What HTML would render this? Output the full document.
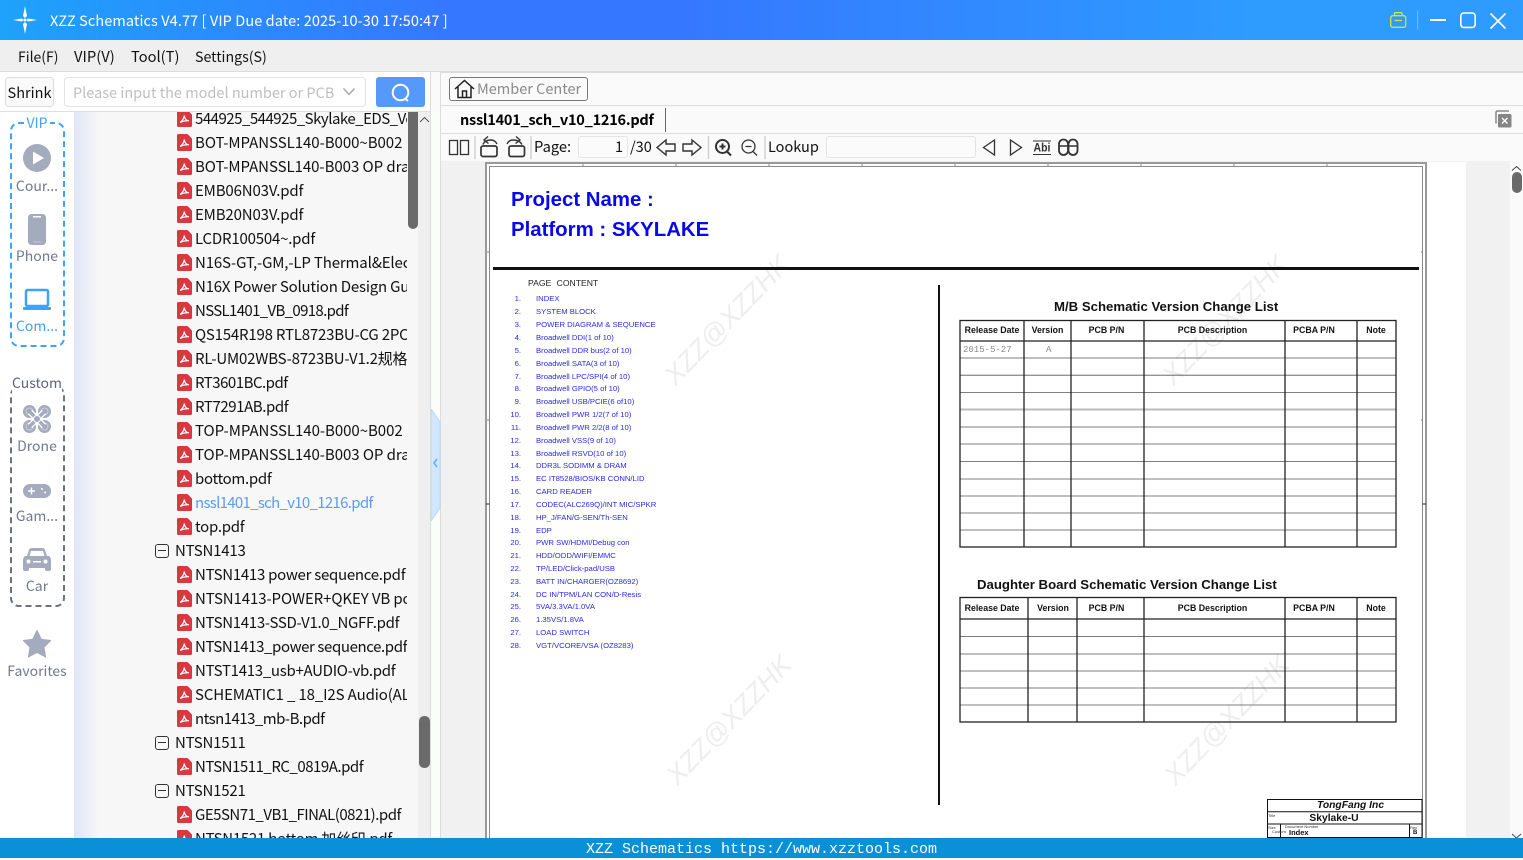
<!DOCTYPE html>
<html><head><meta charset="utf-8"><style>
html,body{margin:0;padding:0}
body{width:1523px;height:858px;overflow:hidden;position:relative;background:#fafafa;font-family:"Noto Sans CJK SC","Liberation Sans",sans-serif;color:#111}
div,span,svg{position:absolute;box-sizing:border-box}
.t{white-space:nowrap;line-height:20px}
#tree{left:74px;top:112px;width:333px;height:726px;overflow:hidden;background:linear-gradient(90deg,#dfe6f5 0,#f7f7f7 26px)}
#tree .r{left:121px;font-size:15px;white-space:nowrap;line-height:20px;color:#111;margin-top:1px}
#tree .f{left:101px;font-size:15px;white-space:nowrap;line-height:20px;color:#111;margin-top:1px;letter-spacing:-.2px}
#tree svg.p{left:103px;width:15px;height:17px}
#tree .m{left:81px;width:14px;height:14px;border:1px solid #333;border-radius:3px;margin-top:1px}
#tree .m:after{content:"";position:absolute;left:2px;right:2px;top:5px;height:1px;background:#333}
.sl{left:10px;width:54px;text-align:center;font-size:14px;color:#71798c;line-height:20px;white-space:nowrap}
.toc{font:7.7px/10px "Liberation Sans",sans-serif;color:#2a2ae6;white-space:nowrap}
.n{font:7.7px/10px "Liberation Sans",sans-serif;color:#2a2ae6;text-align:right;width:14px;left:507px}
.th{font:bold 8.8px/10px "Liberation Sans",sans-serif;color:#111;text-align:center;white-space:nowrap}
.wm{font:italic 27px/40px "Liberation Sans",sans-serif;color:#eeeeee;white-space:nowrap;transform:rotate(-46deg);width:180px;height:40px;text-align:center}
</style></head><body>
<svg width="0" height="0" style="position:absolute"><defs>
<symbol id="pdf" viewBox="0 0 15 17"><path d="M1.500 0H10.500L15 4.500V15.500Q15 17 13.500 17H1.500Q0 17 0 15.500V1.500Q0 0 1.500 0Z" fill="#d8383f"/><path d="M3 12.500C5 11.500 7 8.500 7.300 5.500C7.600 8.500 9 10.500 12 10.800C9 10.600 5.500 11.200 3 12.500Z" fill="none" stroke="#fff" stroke-width="1.200"/></symbol>
</defs></svg>

<!-- title bar -->
<div style="left:0;top:0;width:1523px;height:40px;background:linear-gradient(90deg,#1ea2fb 0,#3578ff 29%,#3578ff 45%,#2d9bff 82%,#2d9bff 100%)"></div>
<svg style="left:12px;top:5px" width="26" height="30" viewBox="0 0 26 30"><path d="M13 1L15 11L13 13L11 11ZM13 29L11 19L13 17L15 19ZM1 15L10 13.500L11.500 15L10 16.500ZM25 15L16 16.500L14.500 15L16 13.500Z" fill="#fff"/><circle cx="13" cy="15" r="1.500" fill="#fff"/></svg>
<div class="t" style="left:50px;top:11px;color:#fff;font-size:14.5px;letter-spacing:.09px">XZZ Schematics V4.77 [ VIP Due date: 2025-10-30 17:50:47 ]</div>
<svg style="left:1388px;top:10px" width="90" height="22" viewBox="0 0 90 22" fill="none"><g stroke="#d9e23c" stroke-width="1.300"><rect x="2.700" y="5.700" width="15" height="11.600" rx="2"/><path d="M6.500 5.500V3.500Q6.500 2.700 7.500 2.700H13Q14 2.700 14 3.500V5.500M6.500 10.500H14"/></g><path d="M29.700 .5V19.500" stroke="#7fbdf5"/><path d="M42 10H58" stroke="#fff" stroke-width="2"/><rect x="72.800" y="3" width="14.400" height="14.400" rx="3" stroke="#fff" stroke-width="1.600"/></svg>
<svg style="left:1488px;top:11px" width="20" height="20" viewBox="0 0 20 20" fill="none"><path d="M2.500 2.500L17.500 17.500M17.500 2.500L2.500 17.500" stroke="#fff" stroke-width="1.600"/></svg>

<!-- menu -->
<div style="left:0;top:40px;width:1523px;height:32px;background:#efefef;border-bottom:1px solid #dcdcdc"></div>
<div class="t" style="left:18px;top:47px;font-size:14px">File(F)</div>
<div class="t" style="left:74px;top:47px;font-size:14.800px">VIP(V)</div>
<div class="t" style="left:131px;top:47px;font-size:14.700px">Tool(T)</div>
<div class="t" style="left:195px;top:47px;font-size:14.200px">Settings(S)</div>

<!-- left panel -->
<div style="left:0;top:72px;width:431px;height:766px;background:#fff"></div>
<div style="left:0;top:111px;width:431px;height:1px;background:#dedede"></div>
<div class="t" style="left:5px;top:77px;width:49px;height:30px;border:1px solid #ddd;border-radius:4px;background:#fafafa;text-align:center;line-height:29px;font-size:14.500px">Shrink</div>
<div style="left:64px;top:77px;width:302px;height:30px;border:1px solid #e2e2e2;border-radius:4px;background:#fff"></div>
<div class="t" style="left:73px;top:83px;font-size:14.500px;color:#bfbfbf">Please input the model number or PCB</div>
<svg style="left:342px;top:87px" width="14" height="10" viewBox="0 0 14 10" fill="none"><path d="M1.500 1.500L7 7.500L12.500 1.500" stroke="#a8a8a8" stroke-width="1.400"/></svg>
<div style="left:376px;top:77px;width:49px;height:30px;background:#5599fb;border-radius:3px"></div>
<svg style="left:390px;top:82px" width="22" height="22" viewBox="0 0 22 22" fill="none"><circle cx="10.500" cy="10.500" r="7.800" stroke="#fff" stroke-width="2"/><path d="M15 16.500L18 19" stroke="#fff" stroke-width="2"/></svg>

<!-- sidebar -->
<div style="left:10px;top:122px;width:55px;height:225px;border:2px dashed #3ca2fa;border-radius:9px"></div>
<div class="sl" style="top:113px;color:#3ca2fa"><span style="position:static;background:#fff;padding:0 2px">VIP</span></div>
<svg style="left:23px;top:144px" width="28" height="28" viewBox="0 0 28 28"><circle cx="14" cy="14" r="14" fill="#a3abbd"/><path d="M10 7.500L21 14L10 20.500Z" fill="#fff"/></svg>
<div class="sl" style="top:176px">Cour...</div>
<svg style="left:28px;top:214px" width="18" height="31" viewBox="0 0 18 31"><rect width="18" height="31" rx="3.500" fill="#a3abbd"/><rect x="5" y="2" width="8" height="1.500" fill="#fff"/><rect x="5" y="27.500" width="8" height="1" fill="#c6cbd6"/></svg>
<div class="sl" style="top:246px">Phone</div>
<svg style="left:22px;top:288px" width="30" height="24" viewBox="0 0 30 24"><rect x="4" y="2" width="22" height="16" rx="1.500" fill="none" stroke="#3ca2fa" stroke-width="2.500"/><rect x="1" y="19" width="28" height="3" rx="1" fill="#3ca2fa"/></svg>
<div class="sl" style="top:316px;color:#3ca2fa">Com...</div>

<div style="left:10px;top:386px;width:55px;height:221px;border:2px dashed #6a7282;border-radius:9px"></div>
<div class="sl" style="top:373px;color:#5d6577"><span style="position:static;background:#fff">Custom</span></div>
<svg style="left:23px;top:405px" width="28" height="28" viewBox="0 0 28 28" fill="none"><g fill="#a3abbd"><circle cx="6.500" cy="6.500" r="6.500"/><circle cx="21.500" cy="6.500" r="6.500"/><circle cx="6.500" cy="21.500" r="6.500"/><circle cx="21.500" cy="21.500" r="6.500"/></g><g stroke="#cdd1db" stroke-width="1"><circle cx="6.500" cy="6.500" r="3.500"/><circle cx="21.500" cy="6.500" r="3.500"/><circle cx="6.500" cy="21.500" r="3.500"/><circle cx="21.500" cy="21.500" r="3.500"/></g><path d="M7 7L21 21M21 7L7 21" stroke="#fff" stroke-width="6"/><path d="M6 6L22 22M22 6L6 22" stroke="#a3abbd" stroke-width="3.500"/><circle cx="14" cy="14" r="3.500" fill="#a3abbd" stroke="#fff"/></svg>
<div class="sl" style="top:436px">Drone</div>
<svg style="left:23px;top:484px" width="28" height="14" viewBox="0 0 28 14"><rect width="28" height="14" rx="7" fill="#a3abbd"/><path d="M5 7H12M8.500 3.500V10.500" stroke="#fff" stroke-width="1.500"/><circle cx="19" cy="5" r="1" fill="#fff"/><circle cx="22" cy="8.500" r="1" fill="#fff"/></svg>
<div class="sl" style="top:506px">Gam...</div>
<svg style="left:23px;top:548px" width="28" height="24" viewBox="0 0 28 24"><path d="M6 2Q6.500 0 9 0H19Q21.500 0 22 2L24 8H26Q28 10 28 12V21Q28 23 26 23H24Q22 23 22 21V20H6V21Q6 23 4 23H2Q0 23 0 21V12Q0 10 2 8H4Z" fill="#a3abbd"/><path d="M6.500 8L8 3H20L21.500 8Z" fill="#fff"/><circle cx="5.500" cy="13.500" r="2" fill="#fff"/><circle cx="22.500" cy="13.500" r="2" fill="#fff"/><rect x="10" y="13" width="8" height="1.500" fill="#fff"/></svg>
<div class="sl" style="top:576px">Car</div>
<svg style="left:23px;top:630px" width="28" height="28" viewBox="0 0 28 28"><path d="M14 0.500L18.300 9.200L27.800 10.500L21 17.300L22.600 27L14 22.400L5.400 27L7 17.300L.2 10.500L9.700 9.200Z" fill="#a3abbd" stroke="#a3abbd" stroke-linejoin="round"/></svg>
<div class="sl" style="top:661px;left:0;width:74px">Favorites</div>

<!-- tree -->
<div id="tree">
<svg class="p" style="top:-2px"><use href="#pdf"/></svg><div class="r" style="top:-4px;letter-spacing:-.5px">544925_544925_Skylake_EDS_Vol1.pdf</div>
<svg class="p" style="top:22px"><use href="#pdf"/></svg><div class="r" style="top:20px;letter-spacing:-.04px">BOT-MPANSSL140-B000~B002</div>
<svg class="p" style="top:46px"><use href="#pdf"/></svg><div class="r" style="top:44px;letter-spacing:-.05px">BOT-MPANSSL140-B003 OP draw.pdf</div>
<svg class="p" style="top:70px"><use href="#pdf"/></svg><div class="r" style="top:68px;letter-spacing:-.15px">EMB06N03V.pdf</div>
<svg class="p" style="top:94px"><use href="#pdf"/></svg><div class="r" style="top:92px;letter-spacing:-.15px">EMB20N03V.pdf</div>
<svg class="p" style="top:118px"><use href="#pdf"/></svg><div class="r" style="top:116px;letter-spacing:-.2px">LCDR100504~.pdf</div>
<svg class="p" style="top:142px"><use href="#pdf"/></svg><div class="r" style="top:140px;letter-spacing:-.15px">N16S-GT,-GM,-LP Thermal&amp;Electrical.pdf</div>
<svg class="p" style="top:166px"><use href="#pdf"/></svg><div class="r" style="top:164px;letter-spacing:-.2px">N16X Power Solution Design Guide.pdf</div>
<svg class="p" style="top:190px"><use href="#pdf"/></svg><div class="r" style="top:188px;letter-spacing:-.65px">NSSL1401_VB_0918.pdf</div>
<svg class="p" style="top:214px"><use href="#pdf"/></svg><div class="r" style="top:212px;letter-spacing:-.2px">QS154R198 RTL8723BU-CG 2PCS.pdf</div>
<svg class="p" style="top:238px"><use href="#pdf"/></svg><div class="r" style="top:236px;letter-spacing:-.2px">RL-UM02WBS-8723BU-V1.2规格书.pdf</div>
<svg class="p" style="top:262px"><use href="#pdf"/></svg><div class="r" style="top:260px;letter-spacing:-.5px">RT3601BC.pdf</div>
<svg class="p" style="top:286px"><use href="#pdf"/></svg><div class="r" style="top:284px;letter-spacing:-.42px">RT7291AB.pdf</div>
<svg class="p" style="top:310px"><use href="#pdf"/></svg><div class="r" style="top:308px;letter-spacing:-.04px">TOP-MPANSSL140-B000~B002</div>
<svg class="p" style="top:334px"><use href="#pdf"/></svg><div class="r" style="top:332px;letter-spacing:-.05px">TOP-MPANSSL140-B003 OP draw.pdf</div>
<svg class="p" style="top:358px"><use href="#pdf"/></svg><div class="r" style="top:356px;letter-spacing:-.3px">bottom.pdf</div>
<svg class="p" style="top:382px"><use href="#pdf"/></svg><div class="r" style="top:380px;color:#5a9cf5;letter-spacing:-.7px">nssl1401_sch_v10_1216.pdf</div>
<svg class="p" style="top:406px"><use href="#pdf"/></svg><div class="r" style="top:404px;letter-spacing:-.28px">top.pdf</div>
<div class="m" style="top:431px"></div><div class="f" style="top:428px">NTSN1413</div>
<svg class="p" style="top:454px"><use href="#pdf"/></svg><div class="r" style="top:452px;letter-spacing:-.28px">NTSN1413 power sequence.pdf</div>
<svg class="p" style="top:478px"><use href="#pdf"/></svg><div class="r" style="top:476px;letter-spacing:-.1px">NTSN1413-POWER+QKEY VB power.pdf</div>
<svg class="p" style="top:502px"><use href="#pdf"/></svg><div class="r" style="top:500px;letter-spacing:-.3px">NTSN1413-SSD-V1.0_NGFF.pdf</div>
<svg class="p" style="top:526px"><use href="#pdf"/></svg><div class="r" style="top:524px;letter-spacing:-.4px">NTSN1413_power sequence.pdf</div>
<svg class="p" style="top:550px"><use href="#pdf"/></svg><div class="r" style="top:548px;letter-spacing:-.28px">NTST1413_usb+AUDIO-vb.pdf</div>
<svg class="p" style="top:574px"><use href="#pdf"/></svg><div class="r" style="top:572px;letter-spacing:-.12px">SCHEMATIC1 _ 18_I2S Audio(ALC.pdf</div>
<svg class="p" style="top:598px"><use href="#pdf"/></svg><div class="r" style="top:596px;letter-spacing:-.53px">ntsn1413_mb-B.pdf</div>
<div class="m" style="top:623px"></div><div class="f" style="top:620px">NTSN1511</div>
<svg class="p" style="top:646px"><use href="#pdf"/></svg><div class="r" style="top:644px;letter-spacing:-.48px">NTSN1511_RC_0819A.pdf</div>
<div class="m" style="top:671px"></div><div class="f" style="top:668px">NTSN1521</div>
<svg class="p" style="top:694px"><use href="#pdf"/></svg><div class="r" style="top:692px;letter-spacing:-.5px">GE5SN71_VB1_FINAL(0821).pdf</div>
<svg class="p" style="top:718px"><use href="#pdf"/></svg><div class="r" style="top:716px;letter-spacing:-.28px">NTSN1521 bottom 加丝印.pdf</div>
</div>
<div style="left:407px;top:112px;width:11px;height:726px;background:#f7f7f7"></div>
<div style="left:408px;top:112px;width:10px;height:117px;background:#6a6a6a;border-radius:0 0 5px 5px"></div>
<div style="left:418px;top:112px;width:12px;height:726px;background:#efefef"></div>
<div style="left:419px;top:716px;width:11px;height:52px;background:#6a6a6a;border-radius:5px"></div>
<svg style="left:419px;top:116px" width="11" height="8" viewBox="0 0 11 8" fill="none"><path d="M1 6L5.500 1.500L10 6" stroke="#555"/></svg>

<!-- splitter -->
<div style="left:430px;top:72px;width:1px;height:766px;background:#dcdcdc"></div>
<div style="left:431px;top:112px;width:9px;height:726px;background:#fbfdfb"></div>
<div style="left:440px;top:72px;width:1px;height:766px;background:#dcdcdc"></div>
<svg style="left:431px;top:409px" width="10" height="112" viewBox="0 0 10 112"><path d="M0 0L9 13V99L0 112Z" fill="#d1e7fd" stroke="#b3d8fb"/><path d="M6 50L3 54L6 58" fill="none" stroke="#65aef5" stroke-width="1.500"/></svg>

<!-- right top rows -->
<div style="left:441px;top:72px;width:1082px;height:1px;background:#dcdcdc"></div>
<div style="left:441px;top:105px;width:1082px;height:1px;background:#dcdcdc"></div>
<div style="left:441px;top:133px;width:1082px;height:1px;background:#dcdcdc"></div>
<div style="left:449px;top:77px;width:139px;height:24px;border:1px solid #777;border-radius:3px;background:#fafafa"></div>
<svg style="left:454px;top:79px" width="21" height="20" viewBox="0 0 21 20" fill="none" stroke="#222" stroke-width="1.500"><path d="M1 10L10.500 1.500L20 10M4 8V18.500H17V8M8.500 18.500V12H12.500V18.500"/></svg>
<div class="t" style="left:477px;top:79px;font-size:14.500px;color:#8a8a8a">Member Center</div>
<div class="t" style="left:460px;top:110px;font-size:14.500px;font-weight:700;color:#000;letter-spacing:-.24px">nssl1401_sch_v10_1216.pdf</div>
<div style="left:665px;top:108px;width:1px;height:24px;background:#666"></div>
<svg style="left:1493px;top:109px" width="20" height="20" viewBox="0 0 20 20"><path d="M3 14.500V3.500Q3 2 4.500 2H16" fill="none" stroke="#888" stroke-width="1.500"/><rect x="5" y="5" width="13.500" height="13.500" rx="1.500" fill="#858585"/><path d="M9 9L14.500 14.500M14.500 9L9 14.500" stroke="#fff" stroke-width="1.300"/></svg>

<!-- toolbar -->
<svg style="left:441px;top:134px" width="660" height="27" viewBox="0 0 660 27" fill="none" stroke="#333" stroke-width="1.300">
<rect x="8.500" y="6.500" width="8" height="14"/><rect x="19.500" y="6.500" width="8" height="14"/>
<path d="M34 2V25" stroke="#ccc"/>
<rect x="40" y="12" width="16" height="10.500" rx="2" stroke-width="1.700"/><path d="M42 10.500Q43.500 6 50 6Q54 6 56 10M47 2.500L43 6L47.500 9.500" stroke-width="1.400"/>
<rect x="68" y="12" width="15.500" height="10.500" rx="2" stroke-width="1.700"/><path d="M66 10Q68 6 72 6Q78.500 6 81 10.500M75 2.500L79 6L74.500 9.500" stroke-width="1.400"/>
<path d="M90 2V25" stroke="#ccc"/>
<path d="M234 10H225V6L216 13.500L225 21V17H234Z" stroke-width="1.400"/>
<path d="M242 10H251V6L260 13.500L251 21V17H242Z" stroke-width="1.400"/>
<path d="M267.500 2V25" stroke="#ccc"/>
<circle cx="281.500" cy="12.500" r="6.500" stroke-width="2"/><path d="M286 17.500L290 21.500" stroke-width="2"/><path d="M278.500 12.500H284.500M281.500 9.500V15.500" stroke-width="2"/>
<circle cx="307.500" cy="12.500" r="6.500"/><path d="M312 17.500L316 21.500M304.500 12.500H310.500"/>
<path d="M324 2V25" stroke="#ccc"/>
<path d="M553.500 6L542.500 13.500L553.500 21Z"/>
<path d="M569.500 6L580.500 13.500L569.500 21Z"/>
<path d="M592 7H610M592 20.500H610" stroke-width="1.100"/>
<rect x="618" y="5.500" width="9" height="15.500" rx="4.500" stroke-width="1.800"/><rect x="627.500" y="5.500" width="9" height="15.500" rx="4.500" stroke-width="1.800"/><path d="M618 12H636.500" stroke-width="1.400"/>
</svg>
<div class="t" style="left:1032px;top:142px;font:bold 10.500px/12px 'Liberation Sans',sans-serif;color:#333;width:20px;text-align:center;transform:scaleY(1.100)">Abi</div>
<div class="t" style="left:534px;top:137px;font-size:14.700px">Page:</div>
<div style="left:578px;top:136px;width:50px;height:22px;border:1px solid #e4e4e4;border-radius:3px;background:#fbfbfb"></div>
<div class="t" style="left:578px;top:137px;width:45px;text-align:right;font-size:14.500px">1</div>
<div class="t" style="left:630px;top:137px;font-size:14.500px">/30</div>
<div class="t" style="left:768px;top:137px;font-size:14.500px">Lookup</div>
<div style="left:826px;top:136px;width:150px;height:22px;border:1px solid #e4e4e4;border-radius:3px;background:#fbfbfb"></div>

<!-- PDF view -->
<div style="left:441px;top:161px;width:1069px;height:677px;background:#f1f1f1"></div>
<div style="left:485px;top:162px;width:981px;height:676px;background:#fff"></div>
<div style="left:485px;top:162px;width:942px;height:676px;border:solid #999;border-width:2px 2px 0 2px"></div>
<div style="left:489px;top:166px;width:934px;height:672px;border:solid #8a8a8a;border-width:1px 1px 0 1px"></div>
<svg style="left:485px;top:162px" width="942" height="676" viewBox="0 0 942 676" fill="none" stroke="#888"><path d="M98 2V4M191 2V4M284 2V4M377 2V4M470 2V4M563 2V4M656 2V4M749 2V4M842 2V4M2 258H4M938 258H936M2 90H4M938 90H936"/><path d="M1 342H4.500M941 342H937.500" stroke="#222"/></svg>
<div style="left:1510px;top:161px;width:13px;height:677px;background:#fafafa"></div>
<div style="left:1512px;top:172px;width:10px;height:21px;background:#6a6a6a;border-radius:5px"></div>
<svg style="left:1511px;top:165px" width="11" height="7" viewBox="0 0 11 7" fill="none"><path d="M1 5.500L5.500 1.500L10 5.500" stroke="#444"/></svg>
<svg style="left:1511px;top:833px" width="11" height="6" viewBox="0 0 11 6" fill="none"><path d="M1 1L5.500 5L10 1" stroke="#444"/></svg>

<div class="wm" style="left:637px;top:300px">XZZ@XZZHK</div>
<div class="wm" style="left:1135px;top:300px">XZZ@XZZHK</div>
<div class="wm" style="left:639px;top:700px">XZZ@XZZHK</div>
<div class="wm" style="left:1137px;top:700px">XZZ@XZZHK</div>

<div class="t" style="left:511px;top:188px;font:bold 20.400px/24px 'Liberation Sans',sans-serif;color:#0808f0">Project Name :</div>
<div class="t" style="left:511px;top:218px;font:bold 20.400px/24px 'Liberation Sans',sans-serif;color:#0808f0">Platform : SKYLAKE</div>
<div style="left:493px;top:267px;width:926px;height:3px;background:#111"></div>
<div class="t" style="left:528px;top:278px;font:8.600px/10px 'Liberation Sans',sans-serif;color:#222;word-spacing:3px">PAGE CONTENT</div>

<div class="n" style="top:294px">1.</div><div class="toc" style="left:536px;top:294px">INDEX</div>
<div class="n" style="top:307px">2.</div><div class="toc" style="left:536px;top:307px">SYSTEM BLOCK</div>
<div class="n" style="top:320px">3.</div><div class="toc" style="left:536px;top:320px">POWER DIAGRAM &amp; SEQUENCE</div>
<div class="n" style="top:333px">4.</div><div class="toc" style="left:536px;top:333px">Broadwell DDI(1 of 10)</div>
<div class="n" style="top:346px">5.</div><div class="toc" style="left:536px;top:346px">Broadwell DDR bus(2 of 10)</div>
<div class="n" style="top:359px">6.</div><div class="toc" style="left:536px;top:359px">Broadwell SATA(3 of 10)</div>
<div class="n" style="top:372px">7.</div><div class="toc" style="left:536px;top:372px">Broadwell LPC/SPI(4 of 10)</div>
<div class="n" style="top:384px">8.</div><div class="toc" style="left:536px;top:384px">Broadwell GPIO(5 of 10)</div>
<div class="n" style="top:397px">9.</div><div class="toc" style="left:536px;top:397px">Broadwell USB/PCIE(6 of10)</div>
<div class="n" style="top:410px">10.</div><div class="toc" style="left:536px;top:410px">Broadwell PWR 1/2(7 of 10)</div>
<div class="n" style="top:423px">11.</div><div class="toc" style="left:536px;top:423px">Broadwell PWR 2/2(8 of 10)</div>
<div class="n" style="top:436px">12.</div><div class="toc" style="left:536px;top:436px">Broadwell VSS(9 of 10)</div>
<div class="n" style="top:449px">13.</div><div class="toc" style="left:536px;top:449px">Broadwell RSVD(10 of 10)</div>
<div class="n" style="top:461px">14.</div><div class="toc" style="left:536px;top:461px">DDR3L SODIMM &amp; DRAM</div>
<div class="n" style="top:474px">15.</div><div class="toc" style="left:536px;top:474px">EC IT8528/BIOS/KB CONN/LID</div>
<div class="n" style="top:487px">16.</div><div class="toc" style="left:536px;top:487px">CARD READER</div>
<div class="n" style="top:500px">17.</div><div class="toc" style="left:536px;top:500px">CODEC(ALC269Q)/INT MIC/SPKR</div>
<div class="n" style="top:513px">18.</div><div class="toc" style="left:536px;top:513px">HP_J/FAN/G-SEN/Th-SEN</div>
<div class="n" style="top:526px">19.</div><div class="toc" style="left:536px;top:526px">EDP</div>
<div class="n" style="top:538px">20.</div><div class="toc" style="left:536px;top:538px">PWR SW/HDMI/Debug con</div>
<div class="n" style="top:551px">21.</div><div class="toc" style="left:536px;top:551px">HDD/ODD/WIFI/EMMC</div>
<div class="n" style="top:564px">22.</div><div class="toc" style="left:536px;top:564px">TP/LED/Click-pad/USB</div>
<div class="n" style="top:577px">23.</div><div class="toc" style="left:536px;top:577px">BATT IN/CHARGER(OZ8692)</div>
<div class="n" style="top:590px">24.</div><div class="toc" style="left:536px;top:590px">DC IN/TPM/LAN CON/D-Resis</div>
<div class="n" style="top:602px">25.</div><div class="toc" style="left:536px;top:602px">5VA/3.3VA/1.0VA</div>
<div class="n" style="top:615px">26.</div><div class="toc" style="left:536px;top:615px">1.35VS/1.8VA</div>
<div class="n" style="top:628px">27.</div><div class="toc" style="left:536px;top:628px">LOAD SWITCH</div>
<div class="n" style="top:641px">28.</div><div class="toc" style="left:536px;top:641px">VGT/VCORE/VSA (OZ8283)</div>

<div style="left:938px;top:285px;width:2px;height:520px;background:#111"></div>

<div class="t" style="left:1054px;top:299px;font:bold 13.200px/16px 'Liberation Sans',sans-serif;color:#111">M/B Schematic Version Change List</div>
<svg style="left:958px;top:318px" width="442" height="232" viewBox="0 0 442 232" fill="none">
<g stroke="#555" stroke-width=".8"><path d="M2 40H438M2 57.200H438M2 74.400H438M2 109H438M2 126H438M2 143.500H438M2 161H438M2 178H438M2 195H438M2 212H438"/></g>
<path d="M2 91.500H438" stroke="#bbb" stroke-width="2"/>
<g stroke="#222" stroke-width="1.300"><rect x="2" y="2.500" width="436" height="226.500"/><path d="M2 23H438" stroke-width="1.300"/><path d="M66 2.500V229M113 2.500V229M186 2.500V229M327 2.500V229M399 2.500V229"/></g>
</svg>
<div class="th" style="left:960px;top:325px;width:64px">Release Date</div>
<div class="th" style="left:1024px;top:325px;width:47px">Version</div>
<div class="th" style="left:1071px;top:325px;width:71px">PCB P/N</div>
<div class="th" style="left:1144px;top:325px;width:137px">PCB Description</div>
<div class="th" style="left:1285px;top:325px;width:58px">PCBA P/N</div>
<div class="th" style="left:1357px;top:325px;width:38px">Note</div>
<div class="t" style="left:963px;top:345px;font:9px/10px 'Liberation Mono',monospace;color:#8a8a8a">2015-5-27</div>
<div class="t" style="left:1046px;top:345px;font:9px/10px 'Liberation Mono',monospace;color:#8a8a8a">A</div>

<div class="t" style="left:977px;top:577px;font:bold 13.200px/16px 'Liberation Sans',sans-serif;color:#111">Daughter Board Schematic Version Change List</div>
<svg style="left:958px;top:595px" width="442" height="130" viewBox="0 0 442 130" fill="none">
<g stroke="#555" stroke-width=".8"><path d="M2 41.500H438M2 59H438M2 76H438M2 93H438M2 110H438"/></g>
<g stroke="#222" stroke-width="1.300"><rect x="2" y="2.500" width="436" height="124.500"/><path d="M2 24H438"/><path d="M70 2.500V127M119 2.500V127M186 2.500V127M327 2.500V127M399 2.500V127"/></g>
</svg>
<div class="th" style="left:960px;top:603px;width:64px">Release Date</div>
<div class="th" style="left:1029px;top:603px;width:48px">Version</div>
<div class="th" style="left:1071px;top:603px;width:71px">PCB P/N</div>
<div class="th" style="left:1144px;top:603px;width:137px">PCB Description</div>
<div class="th" style="left:1285px;top:603px;width:58px">PCBA P/N</div>
<div class="th" style="left:1357px;top:603px;width:38px">Note</div>

<!-- title block -->
<svg style="left:1266px;top:798px" width="158" height="41" viewBox="0 0 158 41" fill="none" stroke="#111" stroke-width="1"><rect x="1.500" y="1.500" width="154.500" height="38"/><path d="M1.500 13.800H156M1.500 26H156M14.500 26V40M143.500 26V40"/></svg>
<div class="t" style="left:1267px;top:799px;width:167px;text-align:center;font:italic bold 10.300px/13px 'Liberation Sans',sans-serif;color:#111">TongFang Inc</div>
<div class="t" style="left:1267px;top:812px;width:134px;text-align:center;font:bold 10.300px/13px 'Liberation Sans',sans-serif;color:#111">Skylake-U</div>
<div class="t" style="left:1289px;top:828px;font:bold 7.500px/10px 'Liberation Sans',sans-serif;color:#111">Index</div>
<div class="t" style="left:1285px;top:824px;font:4px/5px 'Liberation Sans',sans-serif;color:#333">Document Number</div>
<div class="t" style="left:1268px;top:813px;font:4px/5px 'Liberation Sans',sans-serif;color:#333">Title</div>
<div class="t" style="left:1268px;top:825px;font:4px/5px 'Liberation Sans',sans-serif;color:#333">Size</div>
<div class="t" style="left:1272px;top:829px;font:4px/5px 'Liberation Sans',sans-serif;color:#333">Custom</div>
<div class="t" style="left:1410px;top:825px;font:4px/5px 'Liberation Sans',sans-serif;color:#333">Rev</div>
<div class="t" style="left:1413px;top:829px;font:bold 6px/8px 'Liberation Sans',sans-serif;color:#111">B</div>

<!-- status bar -->
<div style="left:0;top:838px;width:1523px;height:20px;background:#0a90d7"></div>
<div class="t" style="left:0;top:839px;width:1523px;text-align:center;font:15px/21px 'Liberation Mono',monospace;color:#fff">XZZ Schematics https://www.xzztools.com</div>
</body></html>
